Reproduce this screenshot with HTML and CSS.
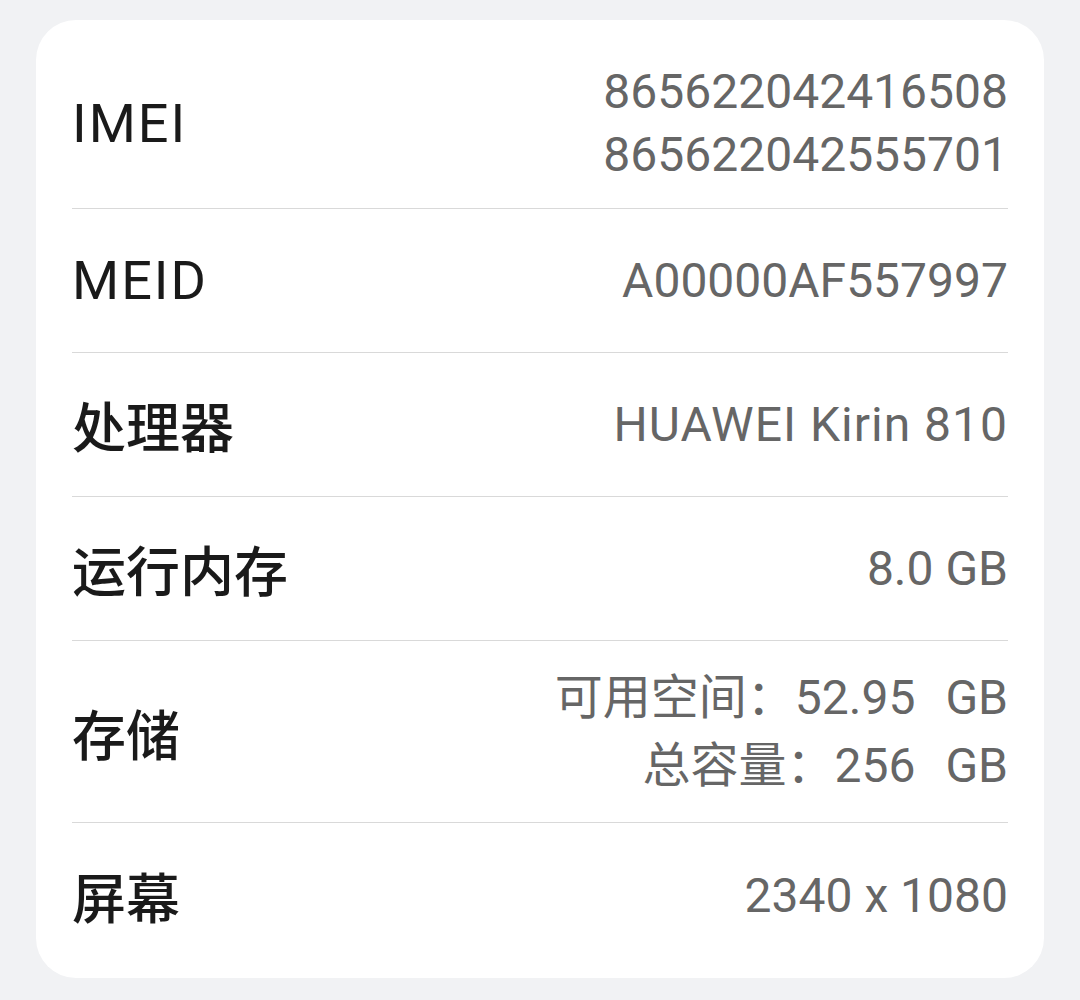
FILE: index.html
```html
<!DOCTYPE html>
<html lang="zh-CN">
<head>
  <meta charset="UTF-8" />
  <meta name="viewport" content="width=device-width, initial-scale=1.0"/>
  <title>关于手机</title>
  <link rel="stylesheet" href="styles.css">
</head>
<body>

  <!-- Device info card -->
  <div class="card">
    <div class="row">
      <span class="label latin">IMEI</span>
      <div class="value">
        <div>865622042416508</div>
        <div>865622042555701</div>
      </div>
    </div>

    <div class="row">
      <span class="label latin">MEID</span>
      <div class="value">A00000AF557997</div>
    </div>

    <div class="row">
      <span class="label">处理器</span>
      <div class="value wide">HUAWEI Kirin 810</div>
    </div>

    <div class="row">
      <span class="label">运行内存</span>
      <div class="value">8.0 GB</div>
    </div>

    <div class="row storage">
      <span class="label">存储</span>
      <div class="value">
        <div>可用空间：52.95<span class="gap"></span>GB</div>
        <div>总容量：256<span class="gap"></span>GB</div>
      </div>
    </div>

    <div class="row last">
      <span class="label">屏幕</span>
      <div class="value">2340 x 1080</div>
    </div>
  </div>

</body>
</html>
```

FILE: styles.css
```css
body {
  margin: 0;
  padding: 20px 36px;
  background-color: #f1f2f4;
  font-family: Roboto, "Noto Sans CJK SC", sans-serif;
}

.card {
  background: #fff;
  border-radius: 40px;
  padding: 18px 36px 11px;
}

.row {
  display: flex;
  justify-content: space-between;
  align-items: center;
  min-height: 144px;
  padding: 22px 0;
  box-sizing: border-box;
  border-bottom: 1px solid #d9d9d9;
}

.row.last {
  border-bottom: none;
}

.label {
  font-size: 54px;
  font-weight: 500;
  color: #1a1a1a;
}

.label.latin {
  font-weight: 400;
  letter-spacing: 2px;
}

.value {
  text-align: right;
  font-size: 48px;
  line-height: 63px;
  color: #666;
}

.value.wide {
  letter-spacing: 1px;
}

.storage {
  padding: 23px 0 22px;
}

.storage .value {
  line-height: 68px;
}

.gap {
  display: inline-block;
  width: 30px;
}
```
